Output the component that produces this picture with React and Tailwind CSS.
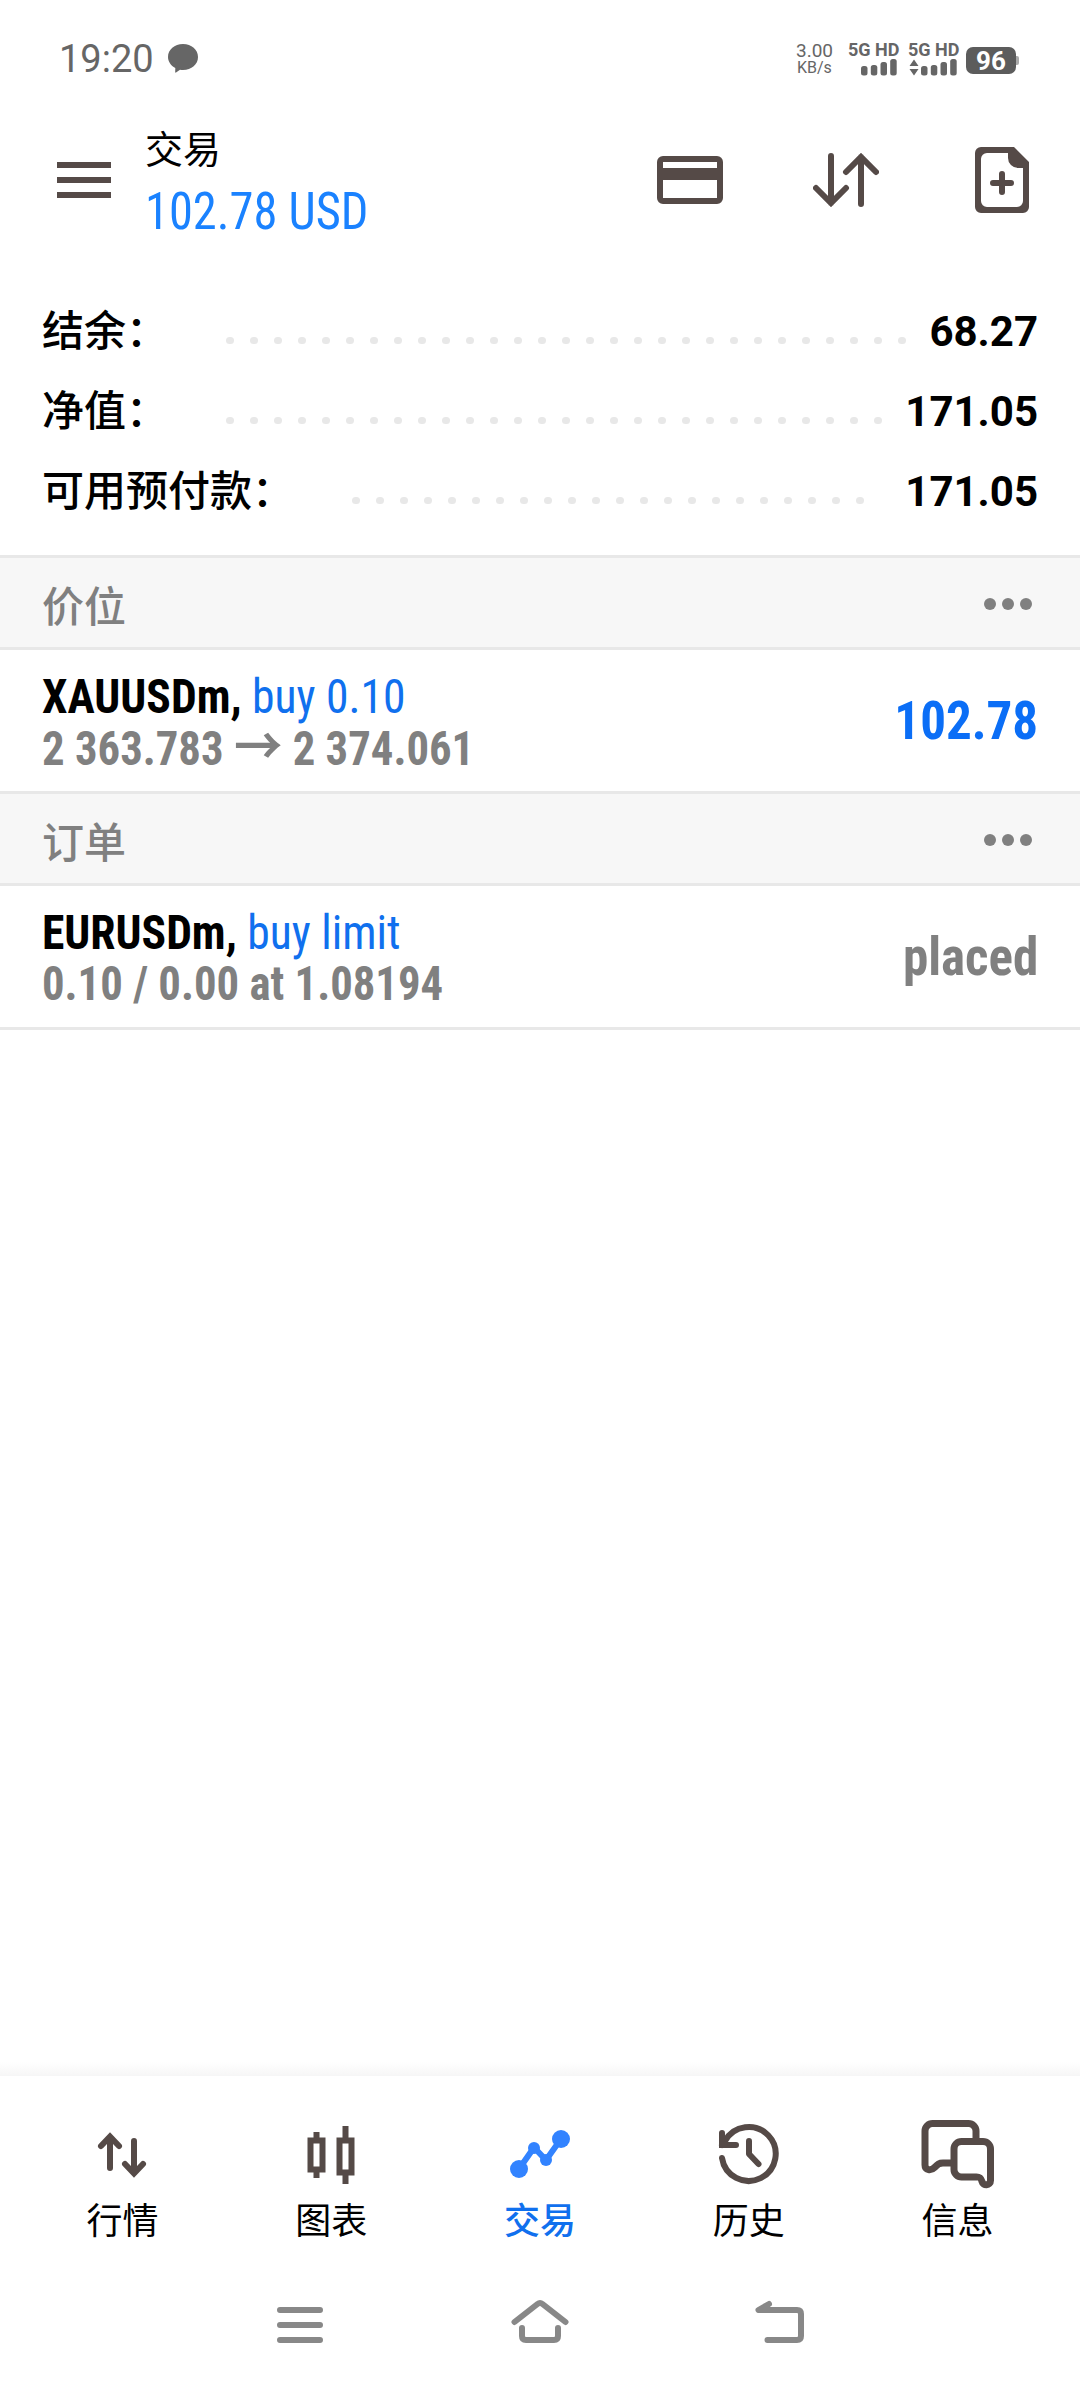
const sans = "font-['Roboto','Noto_Sans_CJK_SC',sans-serif]";
const condensed = "font-['Roboto_Condensed','Roboto','Noto_Sans_CJK_SC',sans-serif] [font-stretch:75%]";

const summary = [
    { label: "结余：", value: "68.27", dots: 29, wide: false },
    { label: "净值：", value: "171.05", dots: 28, wide: false },
    { label: "可用预付款：", value: "171.05", dots: 22, wide: true },
];

const SignalBars = () => (
    <svg width="36" height="17" viewBox="0 0 36 17" fill="#666">
        <rect x="0" y="7" width="6.5" height="9.5" rx="2.5" />
        <rect x="9.8" y="6" width="6.5" height="10.5" rx="2.5" />
        <rect x="19.5" y="3" width="6.5" height="13.5" rx="2.5" />
        <rect x="29.2" y="0" width="6.5" height="16.5" rx="2.5" />
    </svg>
);

const StatusBar = () => (
    <div className="flex h-[120px] justify-between pl-[59px] pr-[61px] text-[#666]">
        <div className="flex pt-[36px]">
            <span className="w-[109px] text-[38px] leading-[46px]">19:20</span>
            <svg className="mt-[8px]" width="30" height="30" viewBox="0 0 30 30" fill="#666">
                <path d="M15 0C23.5 0 30 5.6 30 13s-6.500 13-15 13c-1 0-2 0-3-.3L8 28.500c-.6.400-.9 0-.8-.6L7.300 24C2.800 21.600 0 17.600 0 13 0 5.600 6.500 0 15 0z" />
            </svg>
        </div>
        <div className="flex pt-[43px]">
            <div className="w-[52px] leading-[16px]">
                <p className="text-[19px]">3.00</p>
                <p className="ml-[1px] mt-[1px] text-[16px]">KB/s</p>
            </div>
            <div className="flex w-[60px] flex-col">
                <span className="h-[16px] whitespace-nowrap text-[18px] font-bold leading-[13px] [font-stretch:88%]">5G HD</span>
                <div className="ml-[13px]"><SignalBars /></div>
            </div>
            <div className="flex w-[58px] flex-col">
                <span className="h-[16px] whitespace-nowrap text-[18px] font-bold leading-[13px] [font-stretch:88%]">5G HD</span>
                <div className="ml-[1px] flex gap-[2px]">
                    <svg width="10" height="17" viewBox="0 0 10 17" fill="#666">
                        <path d="M5 .5 9.500 7H.5zM5 16.500 9.500 10H.5z" />
                    </svg>
                    <SignalBars />
                </div>
            </div>
            <div className="mt-[4px] flex h-[27px] items-center">
                <div className="flex h-[27px] w-[50px] items-center justify-center rounded-[7px] bg-[#5c5c5c] text-[26px] font-bold leading-none text-white">96</div>
                <div className="h-[9px] w-[3px] rounded-r-[2px] bg-[#aaa]" />
            </div>
        </div>
    </div>
);

const TopBar = () => (
    <header className="flex h-[170px] pl-[57px] pr-[51px]">
        <svg className="mt-[42px]" width="54" height="36" viewBox="0 0 54 36" fill="#554a47">
            <path d="M0 0h54v6H0zM0 15h54v6H0zM0 30h54v6H0z" />
        </svg>
        <div className="ml-[34px] flex-1 pt-[2px]">
            <h1 className="text-[38px] leading-[56px]">交易</h1>
            <p className={`${condensed} mt-[4px] origin-left scale-x-[0.95] text-[51px] leading-[60px] text-[#1a82ff]`}>102.78 USD</p>
        </div>
        <svg className="mt-[36px]" width="66" height="48" viewBox="0 0 66 48" fill="none" stroke="#554a47" strokeWidth="6">
            <rect x="3" y="3" width="60" height="42" rx="3" />
            <path d="M3 18h60" strokeWidth="12" />
        </svg>
        <svg className="ml-[90px] mt-[33px]" width="66" height="54" viewBox="0 0 66 54" fill="none" stroke="#554a47" strokeWidth="6" strokeLinecap="round">
            <path d="M18 3v47M3 35l15 15 15-15M48 51V4M33 19 48 4l15 15" />
        </svg>
        <svg className="ml-[96px] mt-[27px]" width="54" height="66" viewBox="0 0 54 66">
            <path
                fill="#554a47"
                fillRule="evenodd"
                d="M6 0h33l15 15v45a6 6 0 0 1-6 6H6a6 6 0 0 1-6-6V6a6 6 0 0 1 6-6zM12 6a6 6 0 0 0-6 6v42a6 6 0 0 0 6 6h30a6 6 0 0 0 6-6V21h-5a10 10 0 0 1-10-10V6z"
            />
            <path d="M27 27v18M18 36h18" stroke="#554a47" strokeWidth="6" strokeLinecap="round" />
        </svg>
    </header>
);

const SummaryRow = ({ label, value, dots, wide }) => (
    <div className="flex h-[80px] items-center pl-[42px] pr-[42px]">
        <span className={`${wide ? "w-[310px]" : "w-[184px]"} whitespace-nowrap pt-[3px] text-[42px] font-medium leading-[60px]`}>
            {label}
        </span>
        <div className="mt-[21px] flex flex-1 gap-[16.5px]">
            {Array.from({ length: dots }, (_, i) => (
                <i key={i} className="size-[7.5px] shrink-0 rounded-full bg-[#e8e8e8]" />
            ))}
        </div>
        <span className="pt-[4px] text-[42px] font-bold leading-[60px]">{value}</span>
    </div>
);

const SectionHeader = ({ title }) => (
    <div className="flex h-[95px] items-center justify-between border-y-[3px] border-[#e8e8e8] bg-[#f7f7f7] pl-[42px] pr-[48px] pt-[3px] text-[#808080]">
        <span className="pt-[7px] text-[42px] font-medium leading-[60px]">{title}</span>
        <div className="flex gap-[6px]">
            <i className="size-[12px] rounded-full bg-[#808080]" />
            <i className="size-[12px] rounded-full bg-[#808080]" />
            <i className="size-[12px] rounded-full bg-[#808080]" />
        </div>
    </div>
);

const TradeRow = ({ symbol, action, detail, result, resultColor }) => (
    <div className={`${condensed} flex h-[141px] items-center justify-between px-[42px]`}>
        <div className="pt-[2px] text-[48px] leading-[51px]">
            <p className="origin-left scale-x-[0.949]">
                <span className="font-bold">{symbol}, </span>
                <span className="text-[#1070ee]">{action}</span>
            </p>
            <p className="h-[51px] origin-left scale-x-[0.932] font-bold text-[#808080]">{detail}</p>
        </div>
        <span className={`origin-right scale-x-[0.945] text-[54px] font-bold leading-[60px] ${resultColor}`}>{result}</span>
    </div>
);

const QuotesIcon = () => (
    <svg width="72" height="72" viewBox="0 0 72 72" fill="none" stroke="#554a47" strokeWidth="6" strokeLinecap="round">
        <path d="M24 48V17M15 26l9-9.500 9 9.500M48 21v32M39 44l9 9.500 9-9.500" />
    </svg>
);

const ChartIcon = () => (
    <svg width="72" height="72" viewBox="0 0 72 72" fill="none" stroke="#554a47" strokeWidth="6">
        <path d="M15.500 20.500h12v29h-12zM44.500 20.500h12v32h-12z" />
        <path d="M21.500 12v6M21.500 52v6M50.500 6v12M50.500 55v9" />
    </svg>
);

const TradeIcon = () => (
    <svg width="72" height="72" viewBox="0 0 72 72" fill="#3283ff">
        <path d="M15 49l15-21.500L42 40l15-21" fill="none" stroke="#3283ff" strokeWidth="6" />
        <circle cx="15" cy="49" r="9" />
        <circle cx="30" cy="28" r="6" />
        <circle cx="42" cy="40" r="6" />
        <circle cx="57" cy="19" r="9" />
    </svg>
);

const HistoryIcon = () => (
    <svg width="72" height="72" viewBox="0 0 72 72" fill="none" stroke="#554a47" strokeWidth="6" strokeLinecap="round">
        <path d="M9 38a27 27 0 1 0 3-17l-3 4M9 13v12h14" />
        <path d="M36 21v13l9.500 10" strokeLinejoin="round" />
    </svg>
);

const MessagesIcon = () => (
    <svg width="76" height="72" viewBox="0 0 76 72" fill="none" stroke="#554a47" strokeWidth="7">
        <path d="M56 21V11a7.500 7.500 0 0 0-7.500-7.500h-36A7.500 7.500 0 0 0 5 11v34c0 5.500 6 6 9.500 2.500 3.500-3.500 4.500-4.500 8.500-4.500h11" />
        <path d="M41.500 21.500h21.500a7.500 7.500 0 0 1 7.500 7.500v31.500c0 5.500-7.500 5.500-8.500 1-1-3.500-2-4.500-5.500-4.500h-15a7.500 7.500 0 0 1-7.500-7.500V29a7.500 7.500 0 0 1 7.500-7.500z" />
    </svg>
);

const tabs = [
    { name: "行情", Icon: QuotesIcon },
    { name: "图表", Icon: ChartIcon },
    { name: "交易", Icon: TradeIcon, active: true },
    { name: "历史", Icon: HistoryIcon },
    { name: "信息", Icon: MessagesIcon },
];

const TabBar = () => (
    <nav className="flex h-[195px] shrink-0 bg-white px-[18px] pt-[44px]">
        {tabs.map(({ name, Icon, active }) => (
            <div key={name} className="flex flex-1 flex-col items-center">
                <Icon />
                <span className={`mt-[3px] text-[36px] leading-[54px] ${active ? "font-medium text-[#1070ee]" : "text-black"}`}>{name}</span>
            </div>
        ))}
    </nav>
);

const SystemNav = () => (
    <div className="flex h-[117px] shrink-0 justify-center gap-[183px] bg-white pt-[27px]">
        <svg width="54" height="54" viewBox="0 0 54 54" fill="none" stroke="#888" strokeWidth="6" strokeLinecap="round">
            <path d="M7 12h40M7 27h40M7 42h40" />
        </svg>
        <svg width="60" height="54" viewBox="0 0 60 54" fill="none" stroke="#888" strokeWidth="6" strokeLinecap="round">
            <path d="M4.500 24 27.500 6q2.500-2 5 0L55.500 24" />
            <path d="M12 30v8q0 4 4 4h28q4 0 4-4v-8" />
        </svg>
        <svg width="54" height="54" viewBox="0 0 54 54" fill="none" stroke="#888" strokeWidth="6" strokeLinecap="round">
            <path d="M16 6 5.500 12H44q4 0 4 4v22q0 4-4 4H14.500" strokeLinejoin="round" />
        </svg>
    </div>
);

export default function App() {
    return (
        <div className={`${sans} flex h-[2388px] w-[1080px] flex-col overflow-hidden bg-white text-black`}>
            <StatusBar />
            <TopBar />
            <section className="h-[265px]">
                {summary.map((row) => (
                    <SummaryRow key={row.label} {...row} />
                ))}
            </section>
            <SectionHeader title="价位" />
            <TradeRow
                symbol="XAUUSDm"
                action="buy 0.10"
                detail={<>2 363.783 <span className="text-[52px] leading-none">→</span> 2 374.061</>}
                result="102.78"
                resultColor="text-[#0b6ef6]"
            />
            <SectionHeader title="订单" />
            <TradeRow symbol="EURUSDm" action="buy limit" detail="0.10 / 0.00 at 1.08194" result="placed" resultColor="text-[#808080]" />
            <main className="flex flex-1 flex-col justify-end border-t-[3px] border-[#e8e8e8]">
                <div className="h-[14px] bg-linear-to-b from-white to-[#f6f6f6]" />
            </main>
            <TabBar />
            <SystemNav />
        </div>
    );
}
